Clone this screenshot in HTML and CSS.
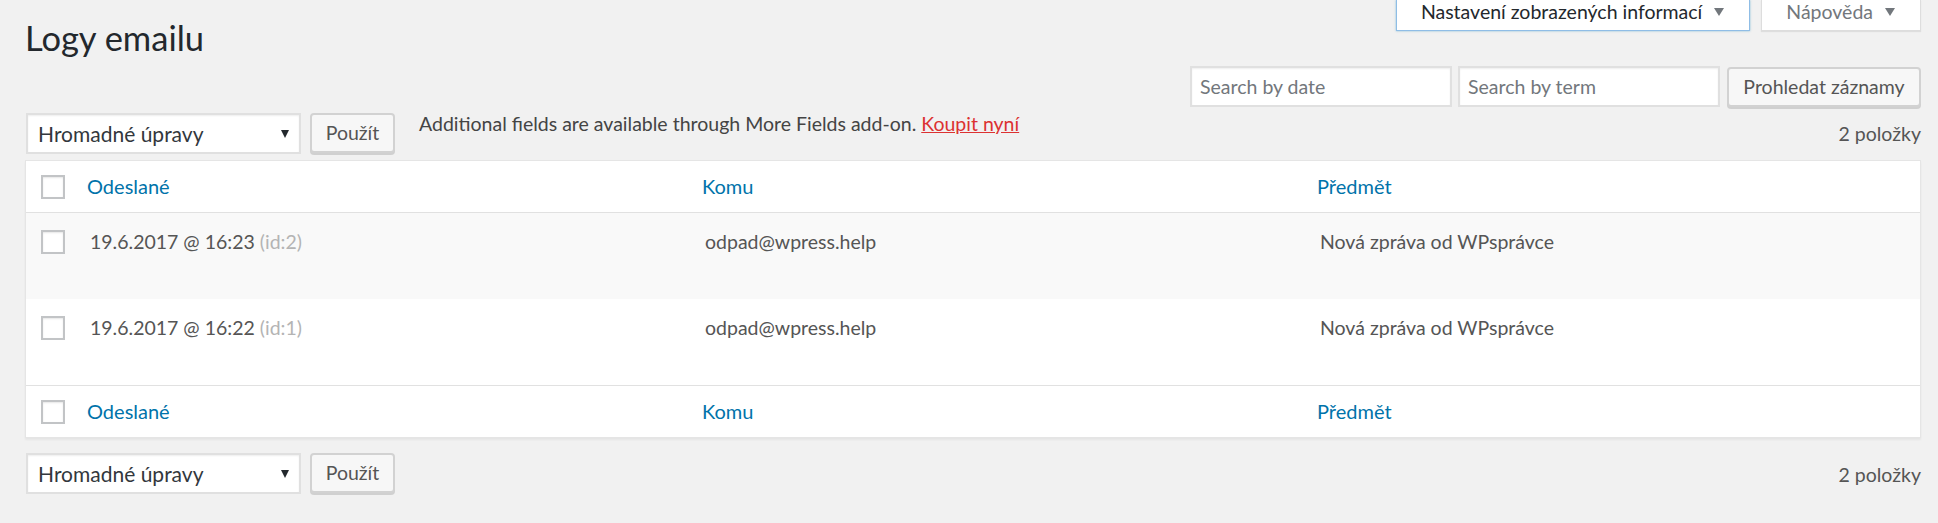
FILE: index.html
```html
<!DOCTYPE html>
<html lang="cs">
<head>
<meta charset="utf-8">
<title>Logy emailu</title>
<link rel="stylesheet" href="styles.css">
</head>
<body>
<div class="wrap">
  <div class="top">
    <h1 class="title">Logy emailu</h1>
    <div class="meta-links">
      <button class="meta-tab active">Nastavení zobrazených informací<span class="caret"></span></button>
      <button class="meta-tab">Nápověda<span class="caret"></span></button>
    </div>
  </div>

  <div class="search-row">
    <input class="field" type="text" placeholder="Search by date">
    <input class="field" type="text" placeholder="Search by term">
    <button class="btn btn-search">Prohledat záznamy</button>
  </div>

  <div class="tablenav">
    <div class="select"><span>Hromadné úpravy</span><span class="select-arrow"></span></div>
    <button class="btn btn-apply">Použít</button>
    <p class="notice">Additional fields are available through More Fields add-on. <a class="buy" href="#">Koupit nyní</a></p>
    <span class="count">2 položky</span>
  </div>

  <table class="list">
    <colgroup>
      <col class="col-check">
      <col>
      <col>
      <col>
    </colgroup>
    <thead>
      <tr>
        <th class="check"><span class="cb"></span></th>
        <th><a href="#">Odeslané</a></th>
        <th><a href="#">Komu</a></th>
        <th><a href="#">Předmět</a></th>
      </tr>
    </thead>
    <tbody>
      <tr class="alt">
        <td class="check"><span class="cb"></span></td>
        <td>19.6.2017 @ 16:23 <span class="id">(id:2)</span></td>
        <td>odpad@wpress.help</td>
        <td>Nová zpráva od WPsprávce</td>
      </tr>
      <tr>
        <td class="check"><span class="cb"></span></td>
        <td>19.6.2017 @ 16:22 <span class="id">(id:1)</span></td>
        <td>odpad@wpress.help</td>
        <td>Nová zpráva od WPsprávce</td>
      </tr>
    </tbody>
    <tfoot>
      <tr>
        <th class="check"><span class="cb"></span></th>
        <th><a href="#">Odeslané</a></th>
        <th><a href="#">Komu</a></th>
        <th><a href="#">Předmět</a></th>
      </tr>
    </tfoot>
  </table>

  <div class="tablenav bottom">
    <div class="select"><span>Hromadné úpravy</span><span class="select-arrow"></span></div>
    <button class="btn btn-apply">Použít</button>
    <span class="count">2 položky</span>
  </div>
</div>
</body>
</html>
```

FILE: styles.css
```css
html, body {
  margin: 0;
  padding: 0;
}

body {
  background: #f1f1f1;
  color: #444;
  font-family: Lato, "Open Sans", "Liberation Sans", sans-serif;
  font-size: 19.5px;
  line-height: 1.5;
}

.wrap {
  padding: 0 17px 0 25px;
}

/* ---------- top: title + screen meta tabs ---------- */
.top {
  display: flex;
  justify-content: space-between;
  align-items: flex-start;
  height: 66px;
}

.title {
  margin: 16px 0 0;
  font-size: 34.5px;
  font-weight: 400;
  line-height: 1.3;
  color: #23282d;
}

.meta-links {
  display: flex;
  gap: 11px;
}

.meta-tab {
  display: flex;
  align-items: center;
  height: 31px;
  padding: 0 25px 6px 24px;
  background: #fff;
  border: 1px solid #ddd;
  border-top: none;
  box-shadow: 0 1px 1px rgba(0, 0, 0, 0.08);
  font: inherit;
  font-size: 19.5px;
  line-height: 24px;
  color: #72777c;
  cursor: pointer;
}

.meta-tab.active {
  color: #23282d;
  border-color: #8fbde6;
  box-shadow: 0 0 2px rgba(30, 140, 190, 0.5);
}

.caret {
  display: inline-block;
  width: 0;
  height: 0;
  margin-left: 12px;
  border-left: 5px solid transparent;
  border-right: 5px solid transparent;
  border-top: 8px solid #72777c;
}

/* ---------- search row ---------- */
.search-row {
  display: flex;
  justify-content: flex-end;
  align-items: flex-start;
  gap: 6px;
  height: 42px;
}

.field {
  box-sizing: border-box;
  width: 262px;
  height: 41px;
  margin: 0;
  padding: 0 8px;
  background: #fff;
  border: 2px solid #e0e0e0;
  box-shadow: inset 0 1px 2px rgba(0, 0, 0, 0.07);
  font: inherit;
  font-size: 19.5px;
  color: #32373c;
  outline: none;
}

.field::placeholder {
  color: #72777c;
}

.btn {
  box-sizing: border-box;
  height: 40px;
  margin: 0;
  background: #f7f7f7;
  border: 2px solid #d2d2d2;
  border-radius: 4px;
  box-shadow: 0 2px 0 #d0d0d0;
  font: inherit;
  font-size: 19.5px;
  line-height: 1;
  color: #555;
  cursor: pointer;
}

.btn-search {
  width: 194px;
  margin-top: 1px;
  margin-left: 1px;
}

.btn-apply {
  width: 85px;
}

/* ---------- tablenav ---------- */
.tablenav {
  display: flex;
  align-items: flex-start;
  height: 42px;
  margin-top: 5px;
  margin-bottom: 5px;
}

.tablenav.bottom {
  margin-top: 15px;
}

.select {
  box-sizing: border-box;
  display: flex;
  align-items: center;
  justify-content: space-between;
  width: 275px;
  height: 41px;
  margin-left: 1px;
  margin-right: 9px;
  padding: 0 10px 0 10px;
  background: #fff;
  border: 2px solid #e0e0e0;
  box-shadow: inset 0 1px 2px rgba(0, 0, 0, 0.07);
  font-size: 21px;
  color: #32373c;
}

.select-arrow {
  width: 0;
  height: 0;
  border-left: 4px solid transparent;
  border-right: 4px solid transparent;
  border-top: 8px solid #23282d;
}

.notice {
  margin: -4px 0 0 24px;
  line-height: 29px;
  color: #444;
}

.buy {
  color: #dc3232;
  text-decoration: underline;
}

.count {
  margin-left: auto;
  margin-top: 6px;
  line-height: 29px;
  color: #555;
}

.tablenav.bottom .count {
  margin-top: 7px;
}

/* ---------- list table ---------- */
.list {
  width: 100%;
  table-layout: fixed;
  border-collapse: separate;
  border-spacing: 0;
  background: #fff;
  border: 1px solid #e5e5e5;
  box-shadow: 0 2px 2px rgba(0, 0, 0, 0.05);
}

.col-check {
  width: 49px;
}

.list th,
.list td {
  padding: 0;
  text-align: left;
  font-weight: 400;
}

.list thead th {
  height: 51px;
  border-bottom: 1px solid #e1e1e1;
  vertical-align: middle;
}

.list tfoot th {
  height: 51px;
  border-top: 1px solid #e1e1e1;
  vertical-align: middle;
}

.list th a {
  display: block;
  padding: 0 12px;
  font-size: 20px;
  line-height: 29px;
  color: #0073aa;
  text-decoration: none;
}

.list tbody td {
  height: 86px;
  padding: 14px 15px 0;
  box-sizing: border-box;
  vertical-align: top;
  line-height: 29px;
  color: #555;
}

.list tbody tr.alt td {
  background: #f9f9f9;
}

.list .check {
  padding: 0 0 0 15px;
}

.list tbody td.check {
  padding: 17px 0 0 15px;
}

.cb {
  display: block;
  box-sizing: border-box;
  width: 24px;
  height: 24px;
  background: #fff;
  border: 2px solid #c2c4c6;
  box-shadow: inset 0 1px 2px rgba(0, 0, 0, 0.1);
}

.id {
  color: #b4b4b4;
}
```
